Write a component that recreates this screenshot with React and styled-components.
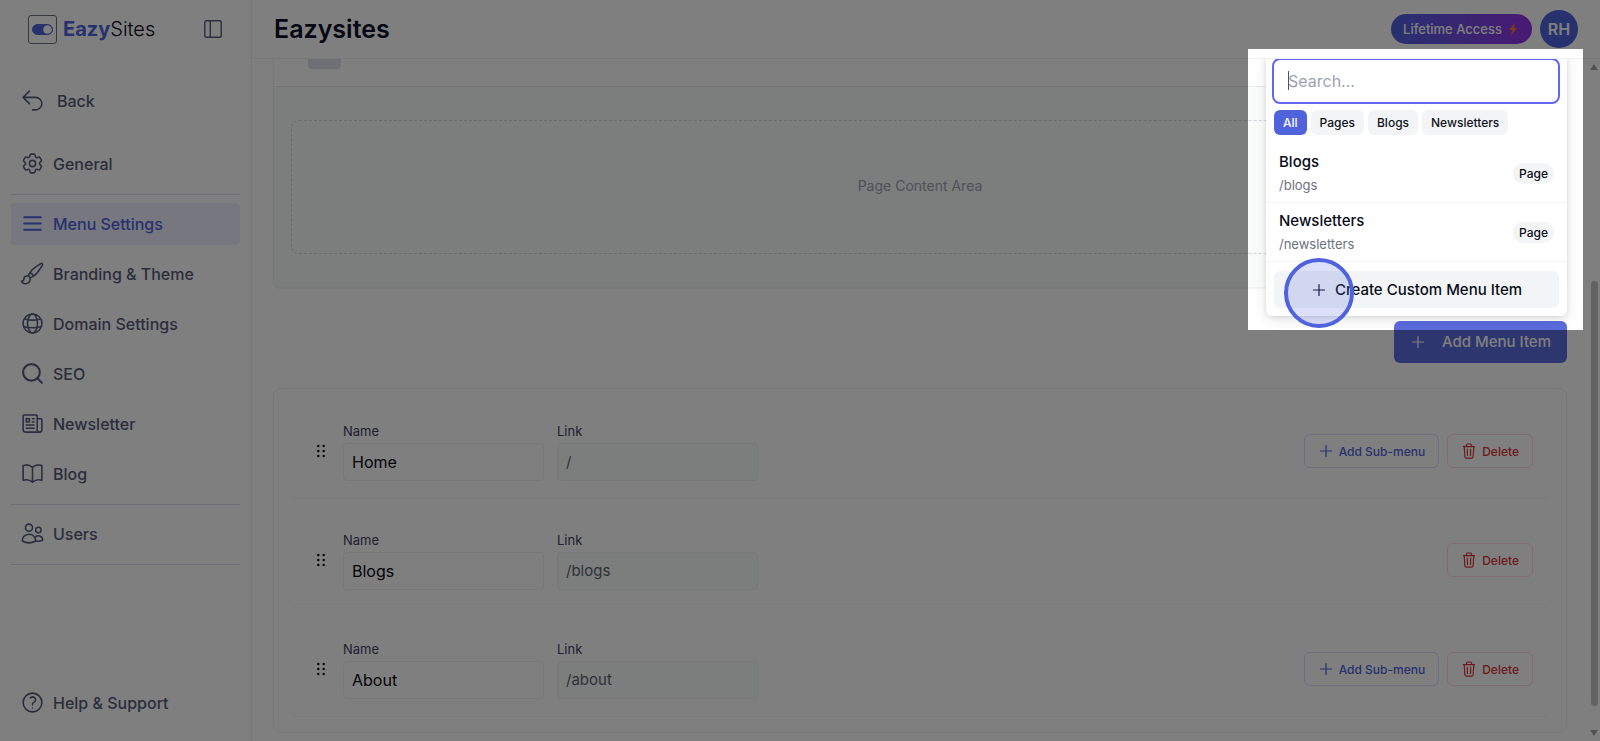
import React from "react";
import styled, { createGlobalStyle, css } from "styled-components";
import {
  HiOutlineArrowUturnLeft,
  HiOutlineCog6Tooth,
  HiOutlinePaintBrush,
  HiOutlineNewspaper,
  HiOutlineBookOpen,
  HiOutlineUsers,
  HiOutlineQuestionMarkCircle,
} from "react-icons/hi2";
import { Search } from "lucide-react";

const primary = "#4f63dd";
const ink = "#0b0f2a";
const slate = "#575b7a";
const line = "#f0f1f4";
const chip = "#f3f4f6";
const tint = "#f8fcfb";

const GlobalStyle = createGlobalStyle`
  * { box-sizing: border-box; }
  body { margin: 0; background: #fff; font-family: Inter, "Liberation Sans", sans-serif; color: ${ink}; }
  button, input { font-family: inherit; }
  button { cursor: pointer; }
`;

const Shell = styled.div`
  position: relative;
  display: grid;
  grid-template-columns: 252px 1fr;
  height: 100vh;
  overflow: hidden;
`;

const Sidebar = styled.aside`
  display: flex;
  flex-direction: column;
  border-right: 1px solid ${line};
  padding: 0 11px 17px;
`;

const Brand = styled.div`
  display: flex;
  align-items: center;
  height: 58px;
  padding: 0 18px 0 17px;
  margin-bottom: 22px;
`;

const LogoMark = styled.span`
  display: grid;
  place-items: center;
  width: 29px;
  height: 29px;
  margin-right: 6px;
  border: 1px solid #6b7280;
  border-radius: 3px;
`;

const LogoText = styled.span`
  flex: 1;
  font-size: 20px;
  font-weight: 300;
  color: #05060f;
  b { font-weight: 700; color: ${primary}; }
`;

const IconButton = styled.button`
  display: grid;
  padding: 0;
  border: 0;
  background: none;
  color: ${slate};
`;

const NavList = styled.nav`
  display: flex;
  flex-direction: column;
  flex: 1;
  gap: 8px;
  margin-top: 21px;
`;

const NavItem = styled.a`
  display: flex;
  align-items: center;
  gap: ${(p) => (p.$wide ? 12 : 8)}px;
  height: 42px;
  padding: 0 9px 1px;
  border-radius: 4px;
  font-size: 16px;
  font-weight: 500;
  text-decoration: none;
  white-space: nowrap;
  color: ${(p) => (p.$active ? primary : slate)};
  background: ${(p) => (p.$active ? "#eceefe" : "transparent")};
  svg { flex: none; }
`;

const NavDivider = styled.hr`
  width: 100%;
  height: 1px;
  margin: 1px 0 0;
  border: 0;
  background: #dfe0ee;
`;

const Page = styled.div`
  display: flex;
  flex-direction: column;
  min-width: 0;
  min-height: 0;
`;

const Header = styled.header`
  display: flex;
  align-items: center;
  flex: none;
  gap: 8px;
  height: 59px;
  padding: 0 22px;
  border-bottom: 1px solid ${line};
`;

const Title = styled.h1`
  flex: 1;
  margin: 0;
  font-size: 25px;
  font-weight: 600;
`;

const PlanButton = styled.button`
  display: flex;
  align-items: center;
  gap: 4px;
  height: 30px;
  padding: 0 12px;
  border: 0;
  border-radius: 15px;
  font-size: 13px;
  font-weight: 500;
  color: #fff;
  background: linear-gradient(90deg, ${primary}, #9333ea);
`;

const Avatar = styled.button`
  width: 38px;
  height: 38px;
  padding: 0;
  border: 0;
  border-radius: 50%;
  font-size: 16px;
  font-weight: 600;
  color: #fff;
  background: ${primary};
`;

const Body = styled.div`
  display: flex;
  flex: 1;
  min-height: 0;
  overflow: hidden;
`;

const Main = styled.main`
  flex: 1;
  min-width: 0;
  padding: 0 22px 8px 21px;
`;

const Scrollbar = styled.div`
  display: flex;
  flex-direction: column;
  align-items: center;
  justify-content: space-between;
  width: 11px;
  padding: 5px 1px 5px 0;
`;

const Thumb = styled.div`
  width: 7px;
  height: 425px;
  margin-top: 186px;
  border-radius: 4px;
  background: #c4c4c4;
`;

const Preview = styled.section`
  border: 1px solid ${line};
  border-top: 0;
  border-radius: 0 0 8px 8px;
  overflow: hidden;
  box-shadow: 0 1px 2px rgba(0, 0, 0, 0.06);
`;

const PreviewBar = styled.div`
  height: 28px;
  padding-left: 34px;
  border-bottom: 1px solid #e9ebee;
`;

const PreviewTab = styled.div`
  width: 33px;
  height: 10px;
  border-radius: 0 0 4px 4px;
  background: #dfe1e6;
`;

const PreviewBody = styled.div`
  padding: 33px 17px;
  background: ${tint};
`;

const ContentArea = styled.div`
  display: grid;
  place-items: center;
  height: 134px;
  padding-bottom: 3px;
  border: 1px dashed #d1d5db;
  border-radius: 8px;
  font-size: 14px;
  color: #9ca3af;
`;

const Actions = styled.div`
  position: relative;
  display: flex;
  justify-content: flex-end;
  margin: 33px 0 25px;
`;

const AddButton = styled.button`
  display: flex;
  align-items: center;
  gap: 16px;
  height: 42px;
  padding: 0 16px 1px;
  border: 0;
  border-radius: 6px;
  font-size: 15px;
  font-weight: 500;
  color: #fff;
  background: #5a6cdc;
`;

const Menu = styled.div`
  position: absolute;
  right: 0;
  bottom: calc(100% + 5px);
  width: 301px;
  border-radius: 6px;
  background: #fff;
  box-shadow: 0 4px 14px rgba(0, 0, 0, 0.1), 0 1px 4px rgba(0, 0, 0, 0.1);
`;

const SearchBox = styled.label`
  position: relative;
  display: block;
  padding: 7px 7px 6px 6px;
`;

const SearchInput = styled.input`
  display: block;
  width: 100%;
  height: 46px;
  padding: 0 14px 1px;
  border: 2px solid #6366f1;
  border-radius: 8px;
  outline: 0;
  font-size: 16px;
  &::placeholder { color: #9ca3af; opacity: 1; }
`;

const Caret = styled.span`
  position: absolute;
  top: 20px;
  left: 22px;
  width: 1px;
  height: 19px;
  background: #4b5563;
`;

const Chips = styled.div`
  display: flex;
  gap: 4px;
  padding: 0 8px 9px;
`;

const Chip = styled.button`
  height: 25px;
  padding: 0 9px;
  border: 0;
  border-radius: 6px;
  font-size: 12px;
  font-weight: 500;
  color: ${(p) => (p.$active ? "#fff" : "#0f1320")};
  background: ${(p) => (p.$active ? primary : chip)};
`;

const Option = styled.a`
  display: flex;
  align-items: center;
  justify-content: space-between;
  height: 59px;
  padding: 0 13px;
  border-bottom: 1px solid ${chip};
  text-decoration: none;
  color: #0a0c18;
`;

const OptionText = styled.span`
  display: grid;
  row-gap: 3px;
  padding-top: 1px;
  font-size: 15px;
  line-height: 20px;
  font-weight: 500;
  small { font-size: 13px; line-height: 20px; font-weight: 400; color: #6b7280; }
`;

const Badge = styled.span`
  padding: 0 6px;
  border-radius: 11px;
  font-size: 12px;
  line-height: 21px;
  font-weight: 500;
  background: ${chip};
`;

const CreateRow = styled.div`
  padding: 9px 8px 8px;
`;

const CreateButton = styled.button`
  display: flex;
  align-items: center;
  justify-content: center;
  gap: 8px;
  width: 100%;
  height: 37px;
  border: 0;
  border-radius: 6px;
  font-size: 15px;
  font-weight: 500;
  color: #0a0c18;
  background: ${chip};
`;

const List = styled.ul`
  display: grid;
  gap: 16px;
  margin: 0;
  padding: 16px;
  list-style: none;
  border: 1px solid ${line};
  border-radius: 8px;
`;

const Row = styled.li`
  display: flex;
  align-items: center;
  gap: 8px;
  height: 93px;
  padding: 0 17px 1px 19px;
  border-radius: 8px;
  box-shadow: 0 1px 2px rgba(0, 0, 0, 0.05);
`;

const Handle = styled.button`
  display: grid;
  place-items: center;
  width: 24px;
  height: 24px;
  margin-right: 2px;
  padding: 0;
  border: 0;
  background: none;
`;

const Field = styled.label`
  display: grid;
  gap: 2px;
  width: 201px;
  margin-right: 5px;
  font-size: 13px;
  line-height: 20px;
  color: #3f4360;
`;

const TextInput = styled.input`
  width: 100%;
  height: 38px;
  padding: 0 8px 1px;
  border: 1px solid ${line};
  border-radius: 4px;
  font-size: 16px;
  color: #05060f;
  background: #fff;
  ${(p) =>
    p.readOnly &&
    css`
      font-size: 15px;
      color: #5c6370;
      background: ${tint};
    `}
`;

const Spacer = styled.span`
  flex: 1;
`;

const SmallButton = styled.button`
  display: flex;
  align-items: center;
  gap: 5px;
  height: 34px;
  padding: 0 13px;
  border: 1px solid ${(p) => (p.$danger ? "#fbdadc" : "#dcdff9")};
  border-radius: 6px;
  font-size: 12px;
  font-weight: 500;
  white-space: nowrap;
  color: ${(p) => (p.$danger ? "#dc3438" : primary)};
  background: #fff;
`;

const Spotlight = styled.div`
  position: absolute;
  top: 49px;
  right: 17px;
  width: 335px;
  height: 281px;
  box-shadow: 0 0 0 9999px rgba(0, 0, 0, 0.5);
  pointer-events: none;
`;

const Pointer = styled.div`
  position: absolute;
  top: 209px;
  left: 36px;
  width: 70px;
  height: 70px;
  border: 4px solid ${primary};
  border-radius: 50%;
  background: rgba(79, 99, 221, 0.2);
`;

const Plus = () => (
  <svg width="16" height="16" viewBox="0 0 16 16" fill="none" stroke="currentColor" strokeWidth="1.2" strokeLinecap="round" aria-hidden="true">
    <path d="M8 2.5v11M2.5 8h11" />
  </svg>
);

const Trash = () => (
  <svg width="16" height="16" viewBox="0 0 16 16" fill="none" stroke="currentColor" strokeWidth="1.2" strokeLinecap="round" strokeLinejoin="round" aria-hidden="true">
    <path d="M2.4 3.6h11.2M5.2 3.4l.5-1.8c.1-.4.4-.6.8-.6h3c.4 0 .7.2.8.6l.5 1.8M3.2 3.8l.7 9.9c.1.9.6 1.4 1.4 1.4h5.4c.8 0 1.3-.5 1.4-1.4l.7-9.9M6.3 6.2l.2 6.2M9.7 6.2l-.2 6.2" />
  </svg>
);

const MenuLines = () => (
  <svg width="25" height="25" viewBox="0 0 24 24" fill="none" stroke="currentColor" strokeWidth="1.8" strokeLinecap="round" aria-hidden="true">
    <path d="M4 6h16M4 12h16M4 18h16" />
  </svg>
);

const Globe = () => (
  <svg width="25" height="25" viewBox="0 0 24 24" fill="none" stroke="currentColor" strokeWidth="1.5" aria-hidden="true">
    <circle cx="12" cy="12" r="9.1" />
    <ellipse cx="12" cy="12" rx="4.8" ry="9.1" />
    <path d="M4.4 7.6c4.8 1.5 10.4 1.5 15.2 0M3.4 14.8c5.4 1.7 11.8 1.7 17.2 0" />
  </svg>
);

const Grip = () => (
  <svg width="10" height="14" viewBox="0 0 10 14" fill="#05060f" aria-hidden="true">
    {[2, 7, 12].map((y) => (
      <React.Fragment key={y}>
        <circle cx="2.3" cy={y} r="1.2" />
        <circle cx="7.7" cy={y} r="1.2" />
      </React.Fragment>
    ))}
  </svg>
);

const Bolt = () => (
  <svg width="14" height="14" viewBox="0 0 14 14" aria-hidden="true">
    <path d="M9.4.4 3 8h3.2L4.6 13.7 11 5.900H7.7z" fill="#f5793b" />
  </svg>
);

const Arrow = ({ up }) => (
  <svg width="8" height="6" viewBox="0 0 8 6" aria-hidden="true">
    <path d={up ? "M4 0l4 6H0z" : "M4 6l4-6H0z"} fill="#a3a3a3" />
  </svg>
);

const sections = [
  [["General", <HiOutlineCog6Tooth size={25} />]],
  [
    ["Menu Settings", <MenuLines />],
    ["Branding & Theme", <HiOutlinePaintBrush size={25} />],
    ["Domain Settings", <Globe />],
    ["SEO", <Search size={25} strokeWidth={2} />],
    ["Newsletter", <HiOutlineNewspaper size={25} />],
    ["Blog", <HiOutlineBookOpen size={25} />],
  ],
  [["Users", <HiOutlineUsers size={25} />]],
];

const rows = [
  { name: "Home", link: "/", sub: true },
  { name: "Blogs", link: "/blogs", sub: false },
  { name: "About", link: "/about", sub: true },
];

const options = [
  ["Blogs", "/blogs"],
  ["Newsletters", "/newsletters"],
];

export default function App() {
  return (
    <>
      <GlobalStyle />
      <Shell>
        <Sidebar>
          <Brand>
            <LogoMark>
              <svg width="21" height="11" viewBox="0 0 21 11" aria-hidden="true">
                <rect x=".5" y=".5" width="20" height="10" rx="5" fill={primary} stroke={primary} />
                <circle cx="15.5" cy="5.5" r="4.3" fill="#fff" />
              </svg>
            </LogoMark>
            <LogoText><b>Eazy</b>Sites</LogoText>
            <IconButton aria-label="Toggle sidebar">
              <svg width="18" height="18" viewBox="0 0 18 18" fill="none" stroke="currentColor" strokeWidth="1.4" aria-hidden="true">
                <rect x=".8" y=".8" width="16.4" height="16.4" rx="1.5" />
                <path d="M6.3 1v16" />
              </svg>
            </IconButton>
          </Brand>
          <NavItem href="#back" $wide>
            <HiOutlineArrowUturnLeft size={25} />
            Back
          </NavItem>
          <NavList>
            {sections.map((items, i) => (
              <React.Fragment key={i}>
                {items.map(([label, icon]) => (
                  <NavItem key={label} href={"#" + label} $active={label === "Menu Settings"}>
                    {icon}
                    {label}
                  </NavItem>
                ))}
                <NavDivider />
              </React.Fragment>
            ))}
          </NavList>
          <NavItem href="#help">
            <HiOutlineQuestionMarkCircle size={25} />
            Help &amp; Support
          </NavItem>
        </Sidebar>

        <Page>
          <Header>
            <Title>Eazysites</Title>
            <PlanButton>Lifetime Access <Bolt /></PlanButton>
            <Avatar>RH</Avatar>
          </Header>
          <Body>
            <Main>
              <Preview>
                <PreviewBar><PreviewTab /></PreviewBar>
                <PreviewBody>
                  <ContentArea>Page Content Area</ContentArea>
                </PreviewBody>
              </Preview>

              <Actions>
                <AddButton><Plus />Add Menu Item</AddButton>
                <Menu>
                  <SearchBox>
                    <SearchInput type="text" placeholder="Search..." aria-label="Search" />
                    <Caret />
                  </SearchBox>
                  <Chips>
                    {["All", "Pages", "Blogs", "Newsletters"].map((c) => (
                      <Chip key={c} $active={c === "All"}>{c}</Chip>
                    ))}
                  </Chips>
                  {options.map(([name, path]) => (
                    <Option key={name} href={"#" + path}>
                      <OptionText>{name}<small>{path}</small></OptionText>
                      <Badge>Page</Badge>
                    </Option>
                  ))}
                  <CreateRow>
                    <CreateButton><Plus />Create Custom Menu Item</CreateButton>
                  </CreateRow>
                </Menu>
              </Actions>

              <List>
                {rows.map((r) => (
                  <Row key={r.name}>
                    <Handle aria-label="Reorder"><Grip /></Handle>
                    <Field>Name<TextInput type="text" defaultValue={r.name} /></Field>
                    <Field>Link<TextInput type="text" defaultValue={r.link} readOnly /></Field>
                    <Spacer />
                    {r.sub && <SmallButton><Plus />Add Sub-menu</SmallButton>}
                    <SmallButton $danger><Trash />Delete</SmallButton>
                  </Row>
                ))}
              </List>
            </Main>
            <Scrollbar>
              <Arrow up />
              <Thumb />
              <Arrow />
            </Scrollbar>
          </Body>
        </Page>

        <Spotlight><Pointer /></Spotlight>
      </Shell>
    </>
  );
}
